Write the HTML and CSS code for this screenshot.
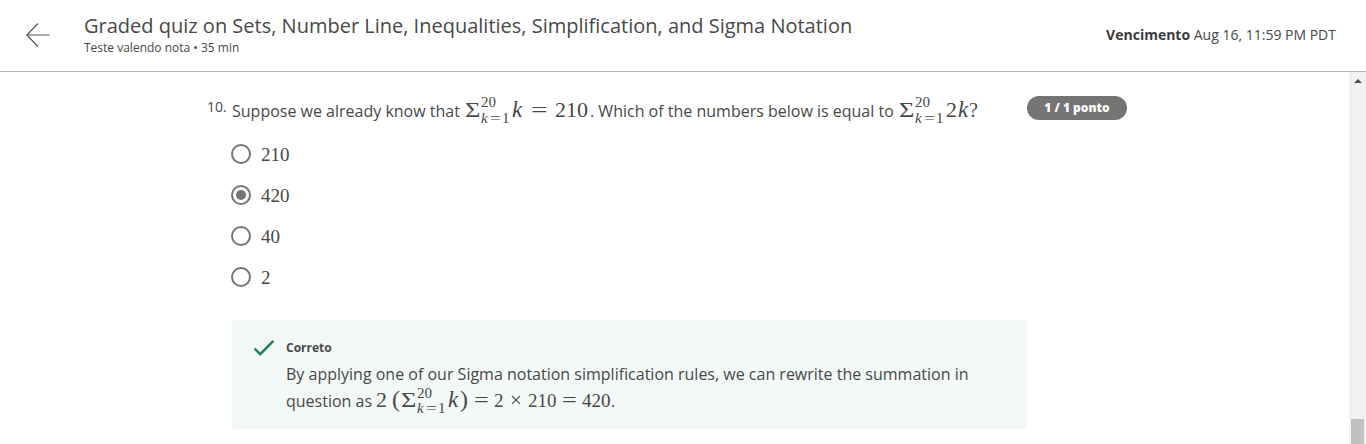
FILE: index.html
```html
<!DOCTYPE html>
<html lang="pt">
<head>
<meta charset="utf-8">
<title>Graded quiz</title>
<link rel="stylesheet" href="styles.css">
</head>
<body>
<header class="header">
  <svg class="back" width="26" height="26" viewBox="0 0 26 26"><path d="M13 1.5L1.8 13L13 24.5M1.8 13H24.5"/></svg>
  <div class="heading">
    <h1 class="title"><span>Graded quiz on Sets, Number Line, Inequalities, Simplification, and Sigma Notation</span></h1>
    <div class="subtitle"><span>Teste valendo nota • 35 min</span></div>
  </div>
  <div class="due"><b>Vencimento</b> <span>Aug 16, 11:59 PM PDT</span></div>
</header>
<div class="body">
  <main class="content">
    <div class="question">
      <span class="number">10.</span>
      <div class="prompt"><span class="text t-first">Suppose we already know that</span><span class="math"><span class="sigma">Σ</span><span class="limits"><span class="sup">20</span><span class="sub"><i>k</i><span class="rel">=</span>1</span></span><i class="k">k</i><span class="eq">=</span><span class="num big">210</span></span><span class="text t-second">. Which of the numbers below is equal to</span><span class="math"><span class="sigma">Σ</span><span class="limits"><span class="sup">20</span><span class="sub"><i>k</i><span class="rel">=</span>1</span></span><span class="coef">2</span><i class="k last">k</i><span class="mark">?</span></span></div>
      <span class="points"><span>1 / 1 ponto</span></span>
    </div>
    <div class="options">
      <label class="option"><span class="radio"></span><span class="value">210</span></label>
      <label class="option"><span class="radio checked"></span><span class="value">420</span></label>
      <label class="option"><span class="radio"></span><span class="value">40</span></label>
      <label class="option"><span class="radio"></span><span class="value">2</span></label>
    </div>
    <section class="feedback">
      <svg class="check" width="22" height="18" viewBox="0 0 22 18"><path d="M1.6 9.6L7.2 15.2L20.4 1.8"/></svg>
      <div class="explain">
        <div class="verdict"><span>Correto</span></div>
        <div class="line"><span class="text">By applying one of our Sigma notation simplification rules, we can rewrite the summation in</span></div>
        <div class="line"><span class="text t-as">question as</span><span class="math"><span class="coef">2</span><span class="paren">(</span><span class="sigma">Σ</span><span class="limits grouped"><span class="sup">20</span><span class="sub"><i>k</i><span class="rel">=</span>1</span></span><i class="k inner">k</i><span class="paren close">)</span><span class="eq small">=</span><span class="num two">2</span><span class="times">×</span><span class="num product">210</span><span class="eq small">=</span><span class="num result">420</span></span><span class="text">.</span></div>
      </div>
    </section>
  </main>
  <div class="scrollbar"><span class="arrow"></span><span class="thumb"></span></div>
</div>
</body>
</html>
```
FILE: styles.css
```css
* { box-sizing: border-box; }
body { margin: 0; height: 444px; overflow: hidden; display: flex; flex-direction: column; background: #fff; color: #484848; font-family: "Open Sans", sans-serif; }
.header { display: flex; height: 72px; flex: none; border-bottom: 1px solid #b4b4b4; padding: 0 30px 0 25px; }
.back { margin-top: 22px; fill: none; stroke: #555; stroke-width: 1.2; }
.heading { margin-left: 33px; padding-top: 12px; white-space: nowrap; }
.title { margin: 0; font-size: 20px; line-height: 28px; font-weight: 400; }
.subtitle { font-size: 12px; line-height: 16px; }
.due { margin-left: auto; font-size: 14px; line-height: 20px; padding-top: 25px; white-space: nowrap; }
.due b { font-weight: 700; color: #3c3c3c; }
.body { display: flex; flex: 1; min-height: 0; }
.content { flex: 1; padding-left: 207px; padding-top: 23px; }
.question { display: flex; height: 44px; }
.number { width: 25px; font-size: 14px; line-height: 24px; }
.prompt { width: 795px; white-space: nowrap; font-size: 16px; line-height: 32px; height: 32px; }
.text { display: inline-block; }
.t-first { width: 233px; }
.t-second { width: 309px; }
.t-as { width: 90px; }
.math { font-family: "Liberation Serif", serif; font-size: 21px; display: inline-flex; align-items: baseline; line-height: 26px; height: 26px; }
.sigma { width: 16px; font-size: 22px; transform: scaleX(1.2); transform-origin: left; }
.limits { display: inline-flex; flex-direction: column; align-self: flex-start; width: 31px; height: 30px; font-size: 15px; line-height: 15px; }
.sup { margin: -2px 0 1px; }
.grouped .sup { margin: 0; }
.sub { display: flex; }
.sub i { width: 8px; }
.rel { width: 13px; text-align: center; transform: scaleX(1.3); }
.k { width: 19px; font-size: 23px; }
.k.last { width: 11px; }
.eq { width: 24px; transform: scaleX(1.4); transform-origin: left; }
.num { font-size: 19px; }
.num.big { font-size: 22px; width: 35px; }
.coef { width: 12px; font-size: 22px; }
.mark { font-size: 20px; }
.points { height: 24px; width: 100px; margin-top: 1px; border-radius: 12px; background: #757575; color: #fff; font-size: 12px; font-weight: 800; line-height: 24px; text-align: center; }
.options { margin-top: -6px; padding-left: 24px; }
.option { display: flex; align-items: center; gap: 10px; height: 41px; }
.radio { width: 20px; height: 20px; border: 2px solid #757575; border-radius: 50%; display: grid; place-items: center; }
.checked::after { content: ""; width: 10px; height: 10px; border-radius: 50%; background: #757575; }
.value { font-family: "Liberation Serif", serif; font-size: 19px; line-height: 22px; padding-top: 2px; }
.feedback { margin: 23px 0 0 25px; width: 795px; height: 109px; background: #f3f9f7; padding: 18px 21px; display: flex; }
.check { fill: none; stroke: #1f8354; stroke-width: 2.4; margin-top: 1px; }
.explain { margin-left: 11px; white-space: nowrap; }
.verdict { font-size: 12px; font-weight: 700; line-height: 20px; margin-bottom: 2px; }
.line { font-size: 16px; line-height: 28px; height: 26px; }
.paren { width: 9px; font-size: 24px; padding-left: 4px; box-sizing: content-box; }
.k.inner { width: 12px; }
.close { padding-left: 0; width: 14px; }
.eq.small { width: 20px; transform: scaleX(1.25); }
.two { width: 16px; }
.times { width: 18px; }
.product { width: 34px; }
.result { width: 29px; }
.scrollbar { width: 17px; background: #f1f1f1; display: flex; flex-direction: column; align-items: center; justify-content: space-between; padding-top: 7px; }
.arrow { border: 4px solid transparent; border-top: 0; border-bottom-color: #505050; }
.thumb { width: 13px; height: 25px; background: #c1c1c1; }
```
